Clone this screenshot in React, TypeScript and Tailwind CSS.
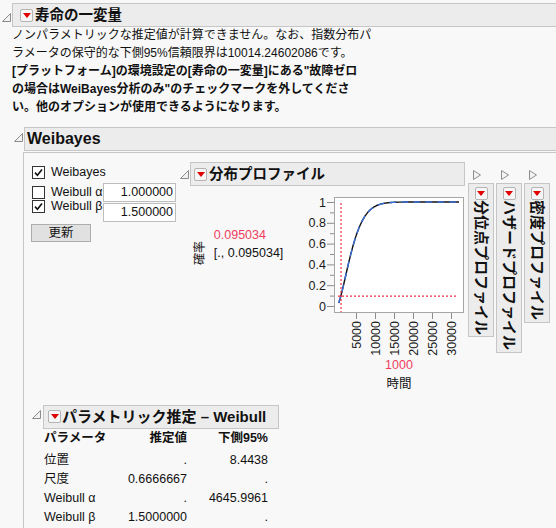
import React from "react";

const RedBtn = () => (
  <span className="inline-flex items-center justify-center w-[13px] h-[13px] border border-[#b4b4b4] rounded-[2px] bg-[#f6f6f6] shrink-0">
    <svg width="8" height="5" viewBox="0 0 8 5">
      <polygon points="0,0 8,0 4,5" fill="#e00000" />
    </svg>
  </span>
);

const DiscTri = () => (
  <svg width="9" height="9" viewBox="0 0 9 9" className="block">
    <polygon points="0.5,8.5 8.5,8.5 8.5,0.5" fill="#f2f2f2" stroke="#8c8c8c" strokeWidth="1" />
  </svg>
);

const CollTri = () => (
  <svg width="8" height="10" viewBox="0 0 8 10" className="block">
    <polygon points="0.5,0.5 7.5,5 0.5,9.5" fill="#f4f4f4" stroke="#8c8c8c" strokeWidth="1" />
  </svg>
);

const Check = ({ checked }: { checked?: boolean }) => (
  <span className="w-[13px] h-[13px] border border-[#333333] bg-white inline-flex items-center justify-center shrink-0">
    {checked && (
      <svg width="9" height="9" viewBox="0 0 9 9">
        <path d="M1 4.6 L3.4 7.2 L8 1.4" fill="none" stroke="#111" strokeWidth="1.6" />
      </svg>
    )}
  </span>
);

const A = 4645.9961;
const B = 1.5;
const sx = (t: number) => 38 + t * 0.0038;
const sy = (f: number) => 114 - f * 104;

function curvePath() {
  const pts: string[] = [];
  for (let t = 450; t <= 32100; t += 150) {
    const f = 1 - Math.exp(-Math.pow(t / A, B));
    pts.push(`${pts.length === 0 ? "M" : "L"}${sx(t).toFixed(2)},${sy(f).toFixed(2)}`);
  }
  return pts.join(" ");
}

const Plot = () => {
  const d = curvePath();
  const yMajor = [0, 0.2, 0.4, 0.6, 0.8, 1];
  const yMinor = [0.1, 0.3, 0.5, 0.7, 0.9];
  const yLabels = ["0", "0.2", "0.4", "0.6", "0.8", "1"];
  const xs = [5000, 10000, 15000, 20000, 25000, 30000];
  const hy = sy(0.095034);
  return (
    <svg width="166" height="165" viewBox="0 0 166 165" className="block">
      <rect x="35.5" y="5.5" width="129" height="115" fill="#ffffff" stroke="#a6a6a6" strokeWidth="1" />
      {yMajor.map((f, i) => (
        <g key={f}>
          <line x1="28" x2="35" y1={sy(f) + 0.5} y2={sy(f) + 0.5} stroke="#8c8c8c" strokeWidth="1" />
          <text x="27" y={sy(f) + 0.5} textAnchor="end" dominantBaseline="central" fontSize="12.5" fill="#1a1a1a" fontFamily="'Liberation Sans', sans-serif">
            {yLabels[i]}
          </text>
        </g>
      ))}
      {yMinor.map((f) => (
        <line key={f} x1="31" x2="35" y1={sy(f) + 0.5} y2={sy(f) + 0.5} stroke="#8c8c8c" strokeWidth="1" />
      ))}
      {xs.map((t) => (
        <g key={t}>
          <line x1={sx(t) + 0.5} x2={sx(t) + 0.5} y1="121" y2="127" stroke="#8c8c8c" strokeWidth="1" />
          <text
            transform={`translate(${sx(t) + 0.5},129) rotate(-90)`}
            textAnchor="end"
            dominantBaseline="central"
            fontSize="12.5"
            fill="#1a1a1a"
            fontFamily="'Liberation Sans', sans-serif"
          >
            {t}
          </text>
        </g>
      ))}
      <path d={d} fill="none" stroke="#111111" strokeWidth="1.4" />
      <path d={d} fill="none" stroke="#3a6fd8" strokeWidth="1.4" strokeDasharray="7 5" />
      <line x1="42" x2="42" y1="11" y2="120" stroke="#ee2a45" strokeWidth="1.2" strokeDasharray="2 2" />
      <line x1="39" x2="158" y1={hy} y2={hy} stroke="#ee2a45" strokeWidth="1.2" strokeDasharray="2 2" />
    </svg>
  );
};

const SideBox = ({ label, h }: { label: string; h: string }) => (
  <div className="flex flex-col items-start self-start">
    <div className="pl-[5px]">
      <CollTri />
    </div>
    <div className={`mt-[3px] w-[26px] ${h} overflow-hidden border border-[#c6c6c6] bg-[#ececec] flex flex-col items-center pt-[3px]`}>
      <RedBtn />
      <span className="[writing-mode:vertical-rl] [text-orientation:sideways] text-[15px] font-bold leading-[24px] whitespace-nowrap text-[#111]">
        {label}
      </span>
    </div>
  </div>
);

export default function App() {
  return (
    <div className="w-[556px] h-[528px] overflow-hidden bg-[#f8f8f8] text-[#111] font-['Liberation_Sans','Noto_Sans_CJK_JP',sans-serif]">
      {/* top outline header */}
      <div className="flex pt-[3px]">
        <div className="w-[12px] pl-[2px] pt-[10px] shrink-0">
          <DiscTri />
        </div>
        <div className="flex-1 -mr-[4px] h-[24px] border border-[#c6c6c6] bg-[#ececec] flex items-center pl-[7px] gap-[2px]">
          <RedBtn />
          <span className="text-[14.5px] font-bold leading-none">寿命の一変量</span>
        </div>
      </div>
      <div className="pl-[12px] -mt-[1px] text-[12px] leading-[18px] whitespace-nowrap">
        <div>ノンパラメトリックな推定値が計算できません。なお、指数分布パ</div>
        <div>ラメータの保守的な下側95%信頼限界は10014.24602086です。</div>
        <div className="font-bold">[プラットフォーム]の環境設定の[寿命の一変量]にある"故障ゼロ</div>
        <div className="font-bold">の場合はWeiBayes分析のみ"のチェックマークを外してくださ</div>
        <div className="font-bold">い。他のオプションが使用できるようになります。</div>
      </div>

      {/* Weibayes header */}
      <div className="flex mt-[11px]">
        <div className="w-[24px] pl-[14px] pt-[6px] shrink-0">
          <DiscTri />
        </div>
        <div className="flex-1 -mr-[4px] h-[24px] border border-[#c6c6c6] bg-[#ececec] flex items-center pl-[2px]">
          <span className="text-[16px] font-bold leading-none">Weibayes</span>
        </div>
      </div>

      {/* Weibayes content */}
      <div className="ml-[23px] mt-[1px] border-l border-t border-[#c6c6c6] h-[400px]">
        <div className="flex items-start">
          {/* controls */}
          <div className="pl-[8px] pt-[13px] w-[152px] shrink-0 text-[12.5px]">
            <div className="flex items-center h-[13px] gap-[6px]">
              <Check checked />
              <span className="leading-none">Weibayes</span>
            </div>
            <div className="flex mt-[4px]">
              <div className="w-[71px] pt-[2px]">
                <div className="flex items-center h-[14px] gap-[6px]">
                  <Check />
                  <span className="leading-none">Weibull α</span>
                </div>
                <div className="flex items-center h-[14px] gap-[6px]">
                  <Check checked />
                  <span className="leading-none">Weibull β</span>
                </div>
              </div>
              <div className="w-[73px] flex flex-col gap-[1px]">
                <div className="h-[19px] border border-[#bdbdbd] bg-white flex items-center justify-end pr-[2px] leading-none">1.000000</div>
                <div className="h-[19px] border border-[#bdbdbd] bg-white flex items-center justify-end pr-[2px] leading-none">1.500000</div>
              </div>
            </div>
            <div className="mt-[2px] -ml-[1px] w-[60px] h-[18px] border border-[#adadad] bg-[#e1e1e1] flex items-center justify-center text-[12.5px] leading-none">
              更新
            </div>
          </div>

          {/* distribution profile */}
          <div className="ml-[4px] w-[285px] shrink-0 flex flex-col">
            <div className="flex mt-[9px]">
              <div className="w-[10px] pt-[8px] shrink-0">
                <DiscTri />
              </div>
              <div className="w-[275px] h-[24px] border border-[#c6c6c6] bg-[#ececec] flex items-center pl-[3px] gap-[2px]">
                <RedBtn />
                <span className="text-[14.5px] font-bold leading-none">分布プロファイル</span>
              </div>
            </div>
            <div className="flex items-start pl-[10px]">
              <div className="w-[20px] mt-[52px] h-[30px] flex items-center justify-center">
                <span className="[writing-mode:vertical-rl] [text-orientation:sideways] rotate-180 text-[12px] leading-none whitespace-nowrap">確率</span>
              </div>
              <div className="w-[86px] ml-[4px] mt-[40px] text-[12.5px] leading-[18px] whitespace-nowrap">
                <div className="text-[#ee3f5f]">0.095034</div>
                <div>[., 0.095034]</div>
              </div>
              <div className="mt-[6px] flex flex-col">
                <Plot />
                <div className="ml-[35px] w-[130px] text-center text-[12.5px] leading-[16px] text-[#ee3f5f]">1000</div>
                <div className="ml-[35px] w-[130px] mt-[3px] text-center text-[12.5px] leading-[16px]">時間</div>
              </div>
            </div>
          </div>

          {/* collapsed side outlines */}
          <div className="ml-[3px] mt-[17px] flex items-start gap-[2px]">
            <SideBox label="分位点プロファイル" h="h-[154px]" />
            <SideBox label="ハザードプロファイル" h="h-[170px]" />
            <SideBox label="密度プロファイル" h="h-[140px]" />
          </div>
        </div>

        {/* parametric estimates */}
        <div className="flex mt-[10px]">
          <div className="w-[19px] pl-[8px] pt-[8px] shrink-0">
            <DiscTri />
          </div>
          <div>
            <div className="inline-flex h-[24px] border border-[#c6c6c6] bg-[#ececec] items-center pl-[4px] pr-[12px] gap-[1px]">
              <RedBtn />
              <span className="text-[15px] font-bold leading-none whitespace-nowrap">パラメトリック推定 – Weibull</span>
            </div>
            <div className="pl-[1px] text-[12.5px]">
              <div className="grid grid-cols-[70px_73px_81px] h-[20px] items-center font-bold">
                <div>パラメータ</div>
                <div className="text-right">推定値</div>
                <div className="text-right">下側95%</div>
              </div>
              <div className="mt-[2px]">
                {[
                  ["位置", ".", "8.4438"],
                  ["尺度", "0.6666667", "."],
                  ["Weibull α", ".", "4645.9961"],
                  ["Weibull β", "1.5000000", "."],
                ].map((r) => (
                  <div key={r[0]} className="grid grid-cols-[70px_73px_81px] h-[19px] items-center">
                    <div>{r[0]}</div>
                    <div className="text-right">{r[1]}</div>
                    <div className="text-right">{r[2]}</div>
                  </div>
                ))}
              </div>
            </div>
          </div>
        </div>
      </div>
    </div>
  );
}
